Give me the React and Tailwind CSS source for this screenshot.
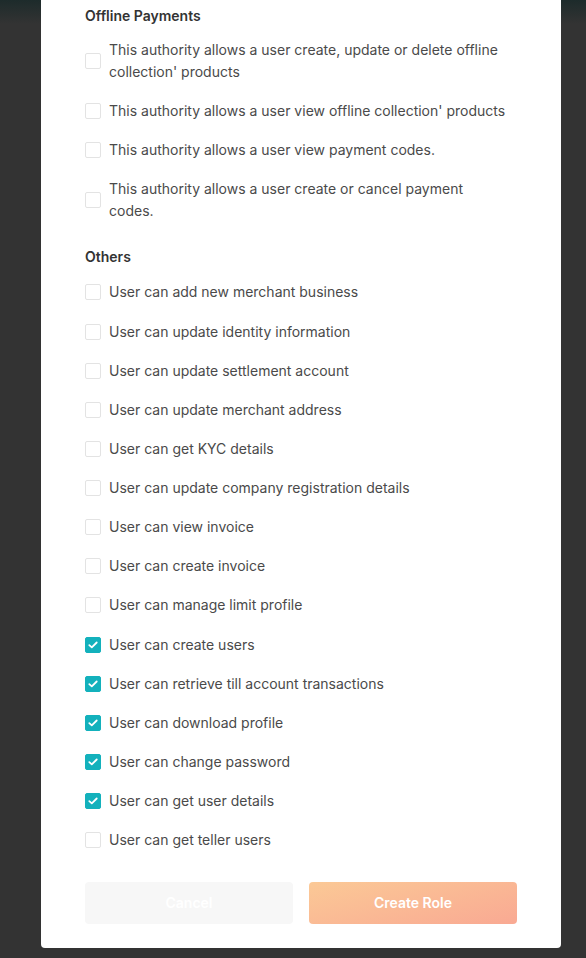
import React, { useState } from 'react';

const offline = [
  { label: "This authority allows a user create, update or delete offline collection' products", checked: false },
  { label: "This authority allows a user view offline collection' products", checked: false },
  { label: 'This authority allows a user view payment codes.', checked: false },
  { label: 'This authority allows a user create or cancel payment codes.', checked: false },
];

const others = [
  ['User can add new merchant business', false],
  ['User can update identity information', false],
  ['User can update settlement account', false],
  ['User can update merchant address', false],
  ['User can get KYC details', false],
  ['User can update company registration details', false],
  ['User can view invoice', false],
  ['User can create invoice', false],
  ['User can manage limit profile', false],
  ['User can create users', true],
  ['User can retrieve till account transactions', true],
  ['User can download profile', true],
  ['User can change password', true],
  ['User can get user details', true],
  ['User can get teller users', false],
];

function Check({ label, initial, wide }) {
  const [checked, setChecked] = useState(initial);
  return (
    <label className="flex items-center gap-2 cursor-pointer mb-[17.14px]" onClick={() => setChecked(!checked)}>
      <span
        className={`shrink-0 w-4 h-4 rounded-[2px] flex items-center justify-center border ${
          checked ? 'bg-[#13b1bc] border-[#13b1bc]' : 'bg-white border-[#e3e3e3]'
        }`}
      >
        {checked && (
          <svg width="10" height="8" viewBox="0 0 10 8" fill="none">
            <path d="M1.3 4.1L3.8 6.4L8.7 1.5" stroke="white" strokeWidth="1.8" strokeLinecap="round" strokeLinejoin="round" />
          </svg>
        )}
      </span>
      <span className={`text-sm leading-[22px] text-[#4a4a4a] ${wide ? 'max-w-[400px]' : ''}`}>{label}</span>
    </label>
  );
}

export default function App() {
  return (
    <div
      className="h-[958px] overflow-hidden bg-[linear-gradient(180deg,#1d2b2b_0px,#333333_24px,#333333_100%)] pl-[41px]"
      style={{ fontFamily: 'Inter, "Noto Sans", sans-serif' }}
    >
      <div className="w-[520px] h-[948px] bg-white rounded-b-[4px] px-[44px] pt-[6px]">
        <h3 className="text-sm leading-5 font-semibold text-[#333] mb-[13px]">Offline Payments</h3>
        {offline.map((o) => (
          <Check key={o.label} label={o.label} initial={o.checked} wide />
        ))}
        <h3 className="text-sm leading-5 font-semibold text-[#333] mt-[25px] mb-[14px]">Others</h3>
        {others.map(([l, c]) => (
          <Check key={l} label={l} initial={c} />
        ))}
        <div className="flex gap-4 mt-[31px]">
          <button className="flex-1 h-[42px] rounded-[4px] bg-[#f7f7f7] text-white text-sm font-semibold">Cancel</button>
          <button className="flex-1 h-[42px] rounded-[4px] bg-[linear-gradient(165deg,#fbc996,#f9a993)] text-white text-sm font-semibold">
            Create Role
          </button>
        </div>
      </div>
    </div>
  );
}
